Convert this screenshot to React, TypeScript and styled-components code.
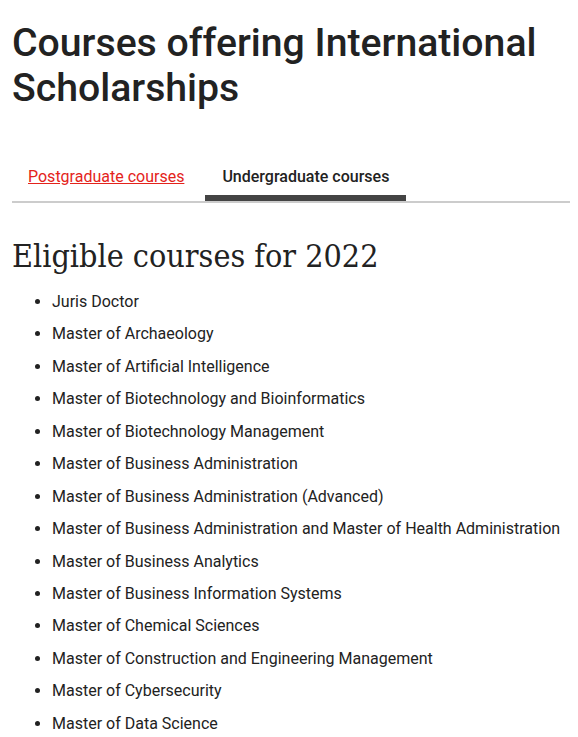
import React from 'react'
import styled, { createGlobalStyle } from 'styled-components'

const GlobalStyle = createGlobalStyle`
  body {
    margin: 0;
    background: #fff;
    font-family: Roboto, "Noto Sans", sans-serif;
    color: #222;
  }
`

const courses = [
  'Juris Doctor',
  'Master of Archaeology',
  'Master of Artificial Intelligence',
  'Master of Biotechnology and Bioinformatics',
  'Master of Biotechnology Management',
  'Master of Business Administration',
  'Master of Business Administration (Advanced)',
  'Master of Business Administration and Master of Health Administration',
  'Master of Business Analytics',
  'Master of Business Information Systems',
  'Master of Chemical Sciences',
  'Master of Construction and Engineering Management',
  'Master of Cybersecurity',
  'Master of Data Science',
]

const App: React.FC = () => {
  return (
    <Page>
      <GlobalStyle />
      <Title>Courses offering International Scholarships</Title>
      <Tabs>
        <Tab>
          <TabLink href="#">Postgraduate courses</TabLink>
        </Tab>
        <Tab active>
          <TabLabel>Undergraduate courses</TabLabel>
        </Tab>
      </Tabs>
      <SubTitle>Eligible courses for 2022</SubTitle>
      <CourseList>
        {courses.map(course => (
          <Course key={course}>{course}</Course>
        ))}
      </CourseList>
    </Page>
  )
}

export default App

const Page = styled.div`
  padding: 0 8px 0 12px;
`

const Title = styled.h1`
  margin: 21px 0 0;
  font-size: 39.2px;
  line-height: 45px;
  font-weight: 500;
  color: #222;
`

const Tabs = styled.div`
  display: flex;
  margin-top: 51px;
  border-bottom: 2px solid #ccc;
`

const Tab = styled.div<{ active?: boolean }>`
  height: 39px;
  display: flex;
  align-items: flex-start;
  box-sizing: border-box;
  padding: 4px 16px 0;
  border-bottom: 6px solid ${({ active }) => (active ? '#444' : 'transparent')};
  ${({ active }) => active && 'padding: 4px 17px 0; margin-left: 5px;'}
`

const TabLink = styled.a`
  color: #e4231b;
  text-decoration: underline;
  font-size: 16px;
  line-height: 22px;
`

const TabLabel = styled.span`
  color: #222;
  font-size: 16px;
  line-height: 22px;
  font-weight: 500;
`

const SubTitle = styled.h2`
  margin: 33px 0 0;
  font-family: "DejaVu Serif Condensed", "DejaVu Serif", serif;
  font-stretch: semi-condensed;
  font-weight: 400;
  font-size: 32px;
  line-height: 40px;
  color: #222;
`

const CourseList = styled.ul`
  margin: 15px 0 0;
  padding-left: 40px;
`

const Course = styled.li`
  font-size: 16px;
  line-height: 22px;
  margin-bottom: 10.45px;
  color: #222;
`
